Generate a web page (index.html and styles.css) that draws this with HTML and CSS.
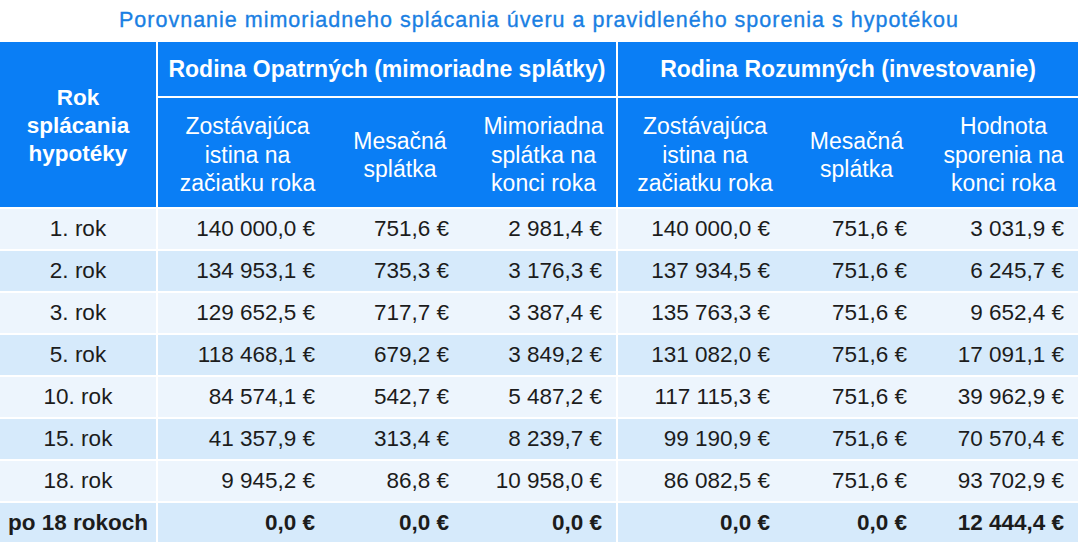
FILE: index.html
```html
<!DOCTYPE html>
<html lang="sk">
<head>
<meta charset="utf-8">
<title>Porovnanie</title>
<link rel="stylesheet" href="styles.css">
</head>
<body>
<h1 class="title">Porovnanie mimoriadneho splácania úveru a pravidleného sporenia s hypotékou</h1>
<table class="cmp">
  <colgroup>
    <col class="c1"><col class="c2"><col class="c3"><col class="c4"><col class="c5"><col class="c6"><col class="c7">
  </colgroup>
  <thead>
    <tr class="group">
      <th rowspan="2" class="year-h sep">Rok<br>splácania<br>hypotéky</th>
      <th colspan="3" class="sep">Rodina Opatrných (mimoriadne splátky)</th>
      <th colspan="3">Rodina Rozumných (investovanie)</th>
    </tr>
    <tr class="sub">
      <th>Zostávajúca<br>istina na<br>začiatku roka</th>
      <th>Mesačná<br>splátka</th>
      <th class="sep">Mimoriadna<br>splátka na<br>konci roka</th>
      <th>Zostávajúca<br>istina na<br>začiatku roka</th>
      <th>Mesačná<br>splátka</th>
      <th>Hodnota<br>sporenia na<br>konci roka</th>
    </tr>
  </thead>
  <tbody>
    <tr class="light"><td class="sep">1. rok</td><td>140 000,0 €</td><td>751,6 €</td><td class="sep">2 981,4 €</td><td>140 000,0 €</td><td>751,6 €</td><td>3 031,9 €</td></tr>
    <tr class="dark"><td class="sep">2. rok</td><td>134 953,1 €</td><td>735,3 €</td><td class="sep">3 176,3 €</td><td>137 934,5 €</td><td>751,6 €</td><td>6 245,7 €</td></tr>
    <tr class="light"><td class="sep">3. rok</td><td>129 652,5 €</td><td>717,7 €</td><td class="sep">3 387,4 €</td><td>135 763,3 €</td><td>751,6 €</td><td>9 652,4 €</td></tr>
    <tr class="dark"><td class="sep">5. rok</td><td>118 468,1 €</td><td>679,2 €</td><td class="sep">3 849,2 €</td><td>131 082,0 €</td><td>751,6 €</td><td>17 091,1 €</td></tr>
    <tr class="light"><td class="sep">10. rok</td><td>84 574,1 €</td><td>542,7 €</td><td class="sep">5 487,2 €</td><td>117 115,3 €</td><td>751,6 €</td><td>39 962,9 €</td></tr>
    <tr class="dark"><td class="sep">15. rok</td><td>41 357,9 €</td><td>313,4 €</td><td class="sep">8 239,7 €</td><td>99 190,9 €</td><td>751,6 €</td><td>70 570,4 €</td></tr>
    <tr class="light"><td class="sep">18. rok</td><td>9 945,2 €</td><td>86,8 €</td><td class="sep">10 958,0 €</td><td>86 082,5 €</td><td>751,6 €</td><td>93 702,9 €</td></tr>
    <tr class="dark total"><td class="sep">po 18 rokoch</td><td>0,0 €</td><td>0,0 €</td><td class="sep">0,0 €</td><td>0,0 €</td><td>0,0 €</td><td>12 444,4 €</td></tr>
  </tbody>
</table>
</body>
</html>
```

FILE: styles.css
```css
html, body {
  margin: 0;
  padding: 0;
  background: #ffffff;
}

body {
  font-family: "Liberation Sans", Arial, sans-serif;
  color: #1c1c1c;
}

.title {
  margin: 0;
  height: 42px;
  line-height: 41px;
  text-align: center;
  font-size: 21.5px;
  font-weight: normal;
  letter-spacing: 1px;
  color: #1a7fe3;
  -webkit-text-stroke: 0.35px #1a7fe3;
  white-space: nowrap;
}

.cmp {
  width: 1078px;
  border-collapse: separate;
  border-spacing: 0;
  table-layout: fixed;
}

.c1 { width: 158px; }
.c2 { width: 171px; }
.c3 { width: 134px; }
.c4 { width: 155px; }
.c5 { width: 166px; }
.c6 { width: 137px; }
.c7 { width: 157px; }

.cmp th {
  background: #0a7ef5;
  color: #ffffff;
  padding: 0;
  border-bottom: 2px solid #ffffff;
}

.cmp th.sep,
.cmp td.sep {
  border-right: 2px solid #ffffff;
}

.group th {
  height: 53px;
  font-weight: bold;
  font-size: 23px;
  padding-top: 1px;
}

.group .year-h {
  font-size: 22.5px;
  line-height: 28px;
  padding-top: 2px;
}

.sub th {
  height: 104px;
  padding: 5px 0 0 8px;
  font-weight: normal;
  font-size: 23px;
  line-height: 28.5px;
}

.cmp td {
  height: 40px;
  padding: 0 14px 0 4px;
  font-size: 22.5px;
  text-align: right;
  border-bottom: 2px solid #ffffff;
  white-space: nowrap;
}

.cmp td:first-child {
  text-align: center;
  padding: 0;
}

.light td { background: #edf5fd; }
.dark td { background: #d6eafb; }

.total td {
  font-weight: bold;
}
```
